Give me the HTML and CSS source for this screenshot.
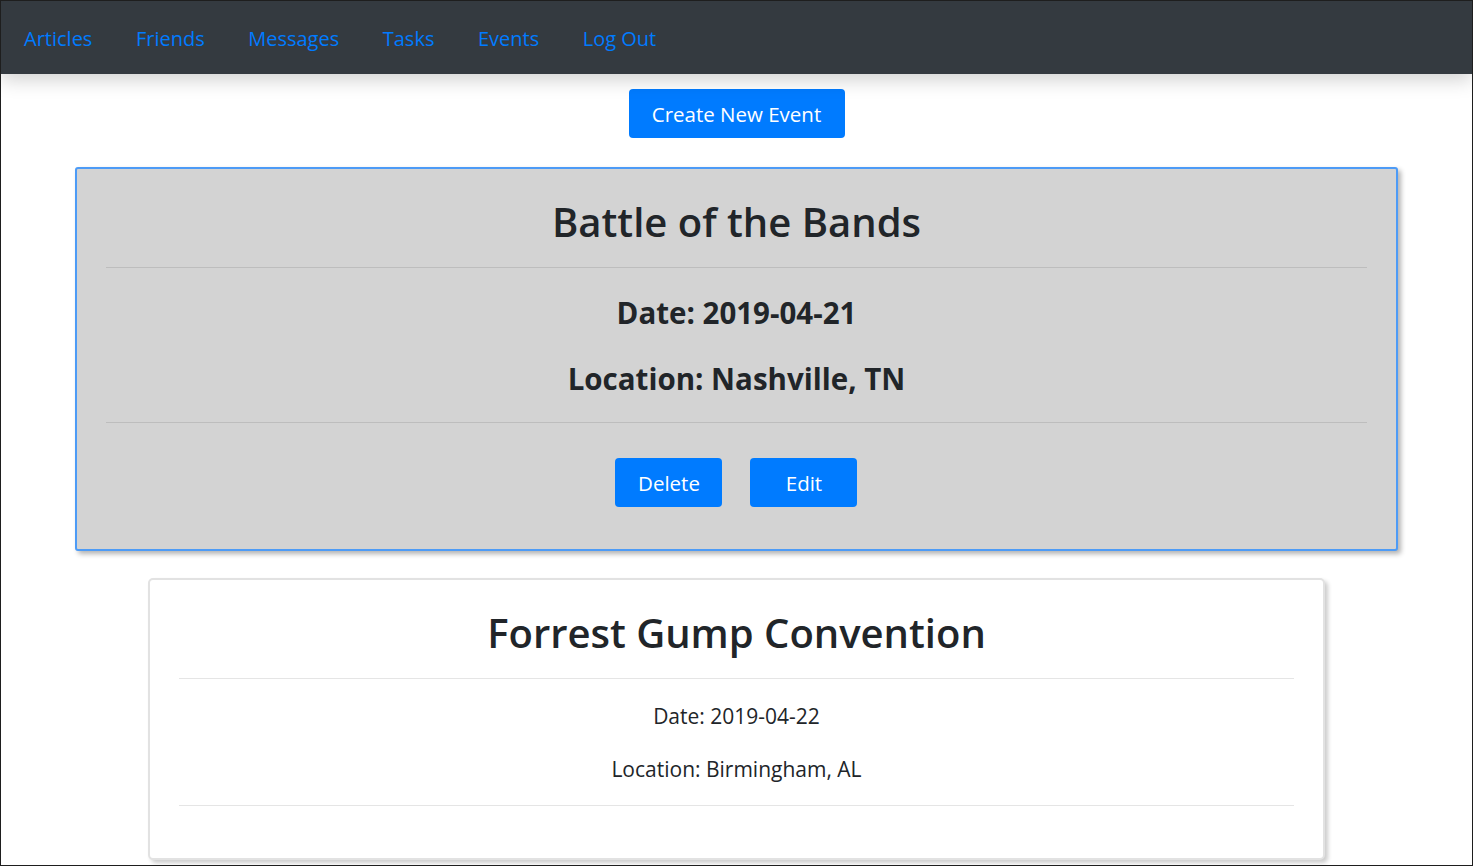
FILE: index.html
```html
<!DOCTYPE html>
<html>
<head>
<meta charset="utf-8">
<title>Events</title>
<link rel="stylesheet" href="styles.css">
</head>
<body>
<div class="frame">
  <nav class="navbar">
    <a class="nav-link" href="#">Articles</a>
    <a class="nav-link" href="#">Friends</a>
    <a class="nav-link" href="#">Messages</a>
    <a class="nav-link" href="#">Tasks</a>
    <a class="nav-link" href="#">Events</a>
    <a class="nav-link" href="#">Log Out</a>
  </nav>
  <main class="content">
    <div class="create-row">
      <button class="btn btn-create">Create New Event</button>
    </div>
    <section class="card card-active">
      <h2 class="card-title">Battle of the Bands</h2>
      <hr class="divider">
      <h3 class="detail detail-bold detail-date">Date: 2019-04-21</h3>
      <h3 class="detail detail-bold detail-loc">Location: Nashville, TN</h3>
      <hr class="divider">
      <div class="actions">
        <button class="btn btn-action">Delete</button>
        <button class="btn btn-action">Edit</button>
      </div>
    </section>
    <section class="card card-plain">
      <h2 class="card-title">Forrest Gump Convention</h2>
      <hr class="divider">
      <p class="detail detail-date-plain">Date: 2019-04-22</p>
      <p class="detail detail-loc-plain">Location: Birmingham, AL</p>
      <hr class="divider">
    </section>
  </main>
</div>
</body>
</html>
```
FILE: styles.css
```css
* { box-sizing: border-box; }
html, body { margin: 0; padding: 0; background: #fff; }
body {
  font-family: "Open Sans", "Noto Sans", sans-serif;
  color: #212529;
}
.frame {
  width: 1473px;
  height: 866px;
  border: 1px solid #1e1e1e;
  overflow: hidden;
  background: #fff;
}
.navbar {
  height: 73px;
  background: #343a40;
  display: flex;
  align-items: center;
  padding-left: 23px;
  gap: 43.5px;
  box-shadow: 0 6px 18px rgba(0,0,0,0.18);
  position: relative;
  z-index: 1;
}
.nav-link {
  color: #007bff;
  text-decoration: none;
  font-size: 20px;
  line-height: 1;
  padding-top: 3px;
}
.content { padding-top: 15px; }
.create-row { display: flex; justify-content: center; }
.btn {
  background: #007bff;
  color: #fff;
  border: none;
  border-radius: 4px;
  font-family: inherit;
  font-size: 20.5px;
  height: 49px;
  padding: 0;
  cursor: pointer;
}
.btn-create { width: 216px; }
.card {
  margin: 29px auto 0;
  padding: 0 29px;
}
.card-active {
  width: 90%;
  background: #d3d3d3;
  border: 2px solid #4d9bf6;
  border-radius: 3px;
  box-shadow: 3px 3px 5px rgba(0,0,0,0.3);
  padding-bottom: 42px;
}
.card-plain {
  width: 80%;
  margin-top: 27px;
  background: #fff;
  border: 2px solid #e2e2e2;
  border-radius: 5px;
  box-shadow: 3px 3px 4px rgba(0,0,0,0.2);
  padding-bottom: 52px;
}
.card-title {
  margin: 0;
  padding-top: 29px;
  text-align: center;
  font-size: 40px;
  font-weight: 600;
  line-height: 48px;
}
.card-plain .card-title { padding-top: 29px; }
.divider {
  margin: 20px 0 0;
  border: 0;
  border-top: 1px solid rgba(0,0,0,0.1);
}
.card-title + .divider { margin-top: 21px; }
.detail { margin: 0; text-align: center; }
.detail-bold {
  font-size: 29.5px;
  font-weight: 700;
  line-height: 34px;
}
.detail-date { margin-top: 28px; }
.detail-loc { margin-top: 32px; }
.card-active .detail-loc + .divider { margin-top: 26px; }
.actions {
  display: flex;
  justify-content: center;
  gap: 28px;
  margin-top: 35px;
}
.btn-action { width: 107px; }
.detail-date-plain, .detail-loc-plain {
  font-size: 21px;
  line-height: 28px;
}
.detail-date-plain { margin-top: 23px; }
.detail-loc-plain { margin-top: 25px; }
.card-plain .detail-loc-plain + .divider { margin-top: 22px; }
```
